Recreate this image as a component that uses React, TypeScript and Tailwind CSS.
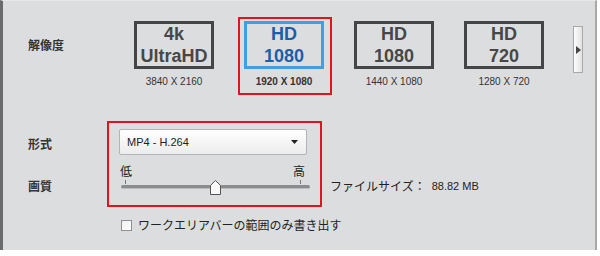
import React from "react";

const jp = "font-['Noto_Sans_CJK_JP','Noto_Sans',sans-serif]";
const latin = "font-['Liberation_Sans','Noto_Sans_CJK_JP',sans-serif]";

type Res = { top: string; bottom: string; size: string; selected?: boolean };

const resolutions: Res[] = [
  { top: "4k", bottom: "UltraHD", size: "3840 X 2160" },
  { top: "HD", bottom: "1080", size: "1920 X 1080", selected: true },
  { top: "HD", bottom: "1080", size: "1440 X 1080" },
  { top: "HD", bottom: "720", size: "1280 X 720" },
];

const ResItem = ({ r }: { r: Res }) => (
  <div className="relative w-[80px] flex flex-col items-center">
    {r.selected && (
      <div className="absolute left-[-6px] right-[-8px] top-[-4px] h-[78px] border-2 border-[#e0141e]" />
    )}
    <div
      className={`w-[80px] h-[48px] border-[3px] flex flex-col items-center justify-center leading-[22px] text-[18px] font-bold ${latin} ${
        r.selected ? "border-[#3d9fe6] text-[#1c5ea8]" : "border-[#454545] text-[#474747]"
      }`}
    >
      <span>{r.top}</span>
      <span>{r.bottom}</span>
    </div>
    <div
      className={`mt-[7px] text-[10px] leading-[12px] text-[#333] ${latin} ${r.selected ? "font-bold" : ""}`}
    >
      {r.size}
    </div>
  </div>
);

const Pentagon = () => (
  <svg width="11" height="15" viewBox="0 0 11 15" className="block">
    <path d="M5.5 0.5 L10.5 5.5 L10.5 14.5 L0.5 14.5 L0.5 5.5 Z" fill="#fafafa" stroke="#555" strokeWidth="1" />
  </svg>
);

export default function App() {
  return (
    <div className="w-[600px] h-[256px] bg-white">
      <div className="w-[597px] h-[250px] bg-[#dcdddf] border-l-[3px] border-l-[#6b6b6b] border-r-2 border-r-[#a8a8a8] border-t border-t-[#e8e8e8] flex flex-col text-[#222]">
        {/* resolution row */}
        <div className="flex items-start pt-[20px] pl-[25px]">
          <div className={`w-[106px] pt-[16px] text-[12px] leading-[16px] font-bold text-[#333] ${jp}`}>解像度</div>
          <div className="flex gap-[30px]">
            {resolutions.map((r, i) => (
              <ResItem key={i} r={r} />
            ))}
          </div>
          <div className="ml-[29px] mt-[5px] w-[10px] h-[47px] border border-[#a9a9a9] bg-gradient-to-r from-[#fdfdfd] to-[#e2e2e2] flex items-center justify-center">
            <svg width="5" height="8" viewBox="0 0 5 8">
              <path d="M0 0 L5 4 L0 8 Z" fill="#444" />
            </svg>
          </div>
        </div>

        {/* format / quality */}
        <div className="flex items-start pl-[25px] mt-[33px]">
          <div className={`w-[79px] flex flex-col text-[12px] leading-[16px] font-bold text-[#333] ${jp}`}>
            <div className="mt-[15px]">形式</div>
            <div className="mt-[26px]">画質</div>
          </div>
          <div className="w-[215px] h-[86px] border-2 border-[#e0141e] pl-[10px] pr-[13px] pt-[6px]">
            <div className="h-[26px] border border-[#b4b4b4] rounded-[2px] bg-gradient-to-b from-[#ffffff] to-[#ececec] flex items-center justify-between pl-[7px] pr-[8px]">
              <span className={`text-[11px] text-[#222] ${latin}`}>MP4 - H.264</span>
              <svg width="7" height="4" viewBox="0 0 7 4">
                <path d="M0 0 L7 0 L3.5 4 Z" fill="#222" />
              </svg>
            </div>
            <div className="relative mt-[9px] h-[40px]">
              <div className={`flex justify-between text-[12px] leading-[14px] pl-[1px] pr-[2px] ${jp}`}>
                <span>低</span>
                <span>高</span>
              </div>
              <div className="flex justify-between px-[6px] mt-[2px]">
                <div className="w-px h-[4px] bg-[#777]" />
                <div className="w-px h-[4px] bg-[#777]" />
              </div>
              <div className="ml-[2px] mr-[-3px] mt-[1px] h-[4px] rounded-full bg-[#8c8c8c] border-b border-[#bdbdbd]" />
              <div className="absolute left-[91px] top-[16px]">
                <Pentagon />
              </div>
            </div>
          </div>
          <div className={`ml-[8px] mt-[57px] flex items-center text-[12px] leading-[16px] ${jp}`}>
            <span>ファイルサイズ：</span>
            <span className={`ml-[6px] text-[11px] ${latin}`}>88.82 MB</span>
          </div>
        </div>

        {/* checkbox */}
        <div className="flex items-center pl-[118px] mt-[10px]">
          <div className="w-[11px] h-[11px] border border-[#8f8f8f] bg-gradient-to-br from-[#f0f0f0] to-[#ffffff]" />
          <span className={`ml-[6px] text-[12px] leading-[16px] ${jp}`}>ワークエリアバーの範囲のみ書き出す</span>
        </div>
      </div>
    </div>
  );
}
